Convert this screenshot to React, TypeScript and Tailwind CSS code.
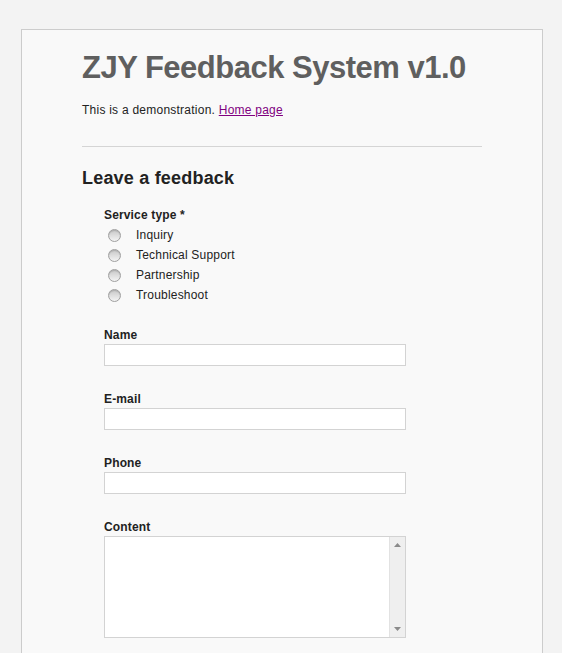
const font = { fontFamily: '"Liberation Sans", Arial, sans-serif' };

const services = ['Inquiry', 'Technical Support', 'Partnership', 'Troubleshoot'];

function Radio() {
    return (
        <span className="block w-[13px] h-[13px] rounded-full border border-[#a0a0a0] bg-gradient-to-b from-[#c8c8c8] to-[#f4f4f4] shadow-[inset_0_1px_1px_rgba(0,0,0,0.15)]" />
    );
}

function Field({ label }: { label: string }) {
    return (
        <div className="mt-[24px]">
            <div className="text-[12px] leading-[18px] font-bold text-[#222] tracking-[0.15px]">{label}</div>
            <div className="w-[302px] h-[22px] border border-[#d3d3d3] bg-white" />
        </div>
    );
}

export default function App() {
    return (
        <div className="min-h-screen bg-[#f3f3f3] pt-[29px] pl-[21px] overflow-hidden" style={font}>
            <div className="w-[522px] border border-[#cccccc] bg-[#f9f9f9] pt-[18px] px-[60px] pb-[60px]">
                <h1 className="text-[31px] leading-[40px] font-bold text-[#5f5f5f] tracking-[-0.5px] whitespace-nowrap">ZJY Feedback System v1.0</h1>
                <p className="mt-[13px] text-[12px] leading-[18px] text-[#222] tracking-[0.24px]">
                    This is a demonstration. <a href="#" className="underline text-[#800080]">Home page</a>
                </p>
                <div className="mt-[27px] h-px bg-[#d5d5d5]" />
                <h2 className="mt-[19px] text-[18px] leading-[24px] font-bold text-[#222] tracking-[0.2px]">Leave a feedback</h2>

                <div className="pl-[22px]">
                    <div className="mt-[16px] text-[12px] leading-[18px] font-bold text-[#222] tracking-[0.15px]">Service type *</div>
                    <div className="mt-px">
                        {services.map(s => (
                            <div key={s} className="flex items-center h-[20px] text-[12px] text-[#222] tracking-[0.2px]">
                                <span className="ml-[4px] mr-[15px]"><Radio /></span>
                                {s}
                            </div>
                        ))}
                    </div>

                    <div className="mt-[-3px]">
                        <Field label="Name" />
                        <Field label="E-mail" />
                        <Field label="Phone" />
                        <div className="mt-[24px]">
                            <div className="text-[12px] leading-[18px] font-bold text-[#222] tracking-[0.15px]">Content</div>
                            <div className="flex w-[302px] h-[102px] border border-[#d3d3d3] bg-white">
                                <div className="flex-1" />
                                <div className="w-[16px] flex flex-col items-center justify-between py-[6px] bg-[#efefef] border-l border-[#e2e2e2]">
                                    <svg width="7" height="4" viewBox="0 0 7 4"><path d="M3.5 0L7 4H0z" fill="#8a8a8a" /></svg>
                                    <svg width="7" height="4" viewBox="0 0 7 4"><path d="M0 0h7L3.5 4z" fill="#8a8a8a" /></svg>
                                </div>
                            </div>
                        </div>
                    </div>
                </div>
            </div>
        </div>
    );
}
